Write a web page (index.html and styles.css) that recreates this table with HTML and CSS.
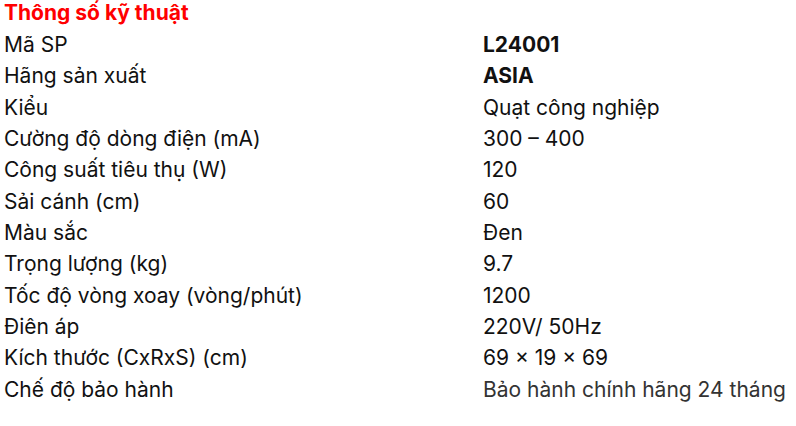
FILE: index.html
```html
<!DOCTYPE html>
<html lang="vi">
<head>
<meta charset="utf-8">
<link rel="stylesheet" href="styles.css">
</head>
<body>
<div class="specs">
  <h3 class="title">Thông số kỹ thuật</h3>
  <div class="grid">
    <div class="label">Mã SP</div><div class="value strong">L24001</div>
    <div class="label">Hãng sản xuất</div><div class="value strong">ASIA</div>
    <div class="label">Kiểu</div><div class="value">Quạt công nghiệp</div>
    <div class="label">Cường độ dòng điện (mA)</div><div class="value">300 – 400</div>
    <div class="label">Công suất tiêu thụ (W)</div><div class="value">120</div>
    <div class="label">Sải cánh (cm)</div><div class="value">60</div>
    <div class="label">Màu sắc</div><div class="value">Đen</div>
    <div class="label">Trọng lượng (kg)</div><div class="value">9.7</div>
    <div class="label">Tốc độ vòng xoay (vòng/phút)</div><div class="value">1200</div>
    <div class="label">Điên áp</div><div class="value">220V/ 50Hz</div>
    <div class="label">Kích thước (CxRxS) (cm)</div><div class="value">69 × 19 × 69</div>
    <div class="label">Chế độ bảo hành</div><div class="value muted">Bảo hành chính hãng 24 tháng</div>
  </div>
</div>
</body>
</html>
```
FILE: styles.css
```css
html, body {
  margin: 0;
  padding: 0;
  background: #fff;
}
body {
  font-family: Inter, "Noto Sans", sans-serif;
  color: #111;
}
.specs {
  padding: 0 0 0 4px;
}
.title {
  margin: 0 0 3px;
  font-size: 21px;
  font-weight: 700;
  color: #ff0000;
  line-height: 26px;
}
.grid {
  display: grid;
  grid-template-columns: 479px 1fr;
  font-size: 21px;
  line-height: 31.35px;
}
.strong {
  font-weight: 700;
}
.muted {
  color: #333;
}
```
